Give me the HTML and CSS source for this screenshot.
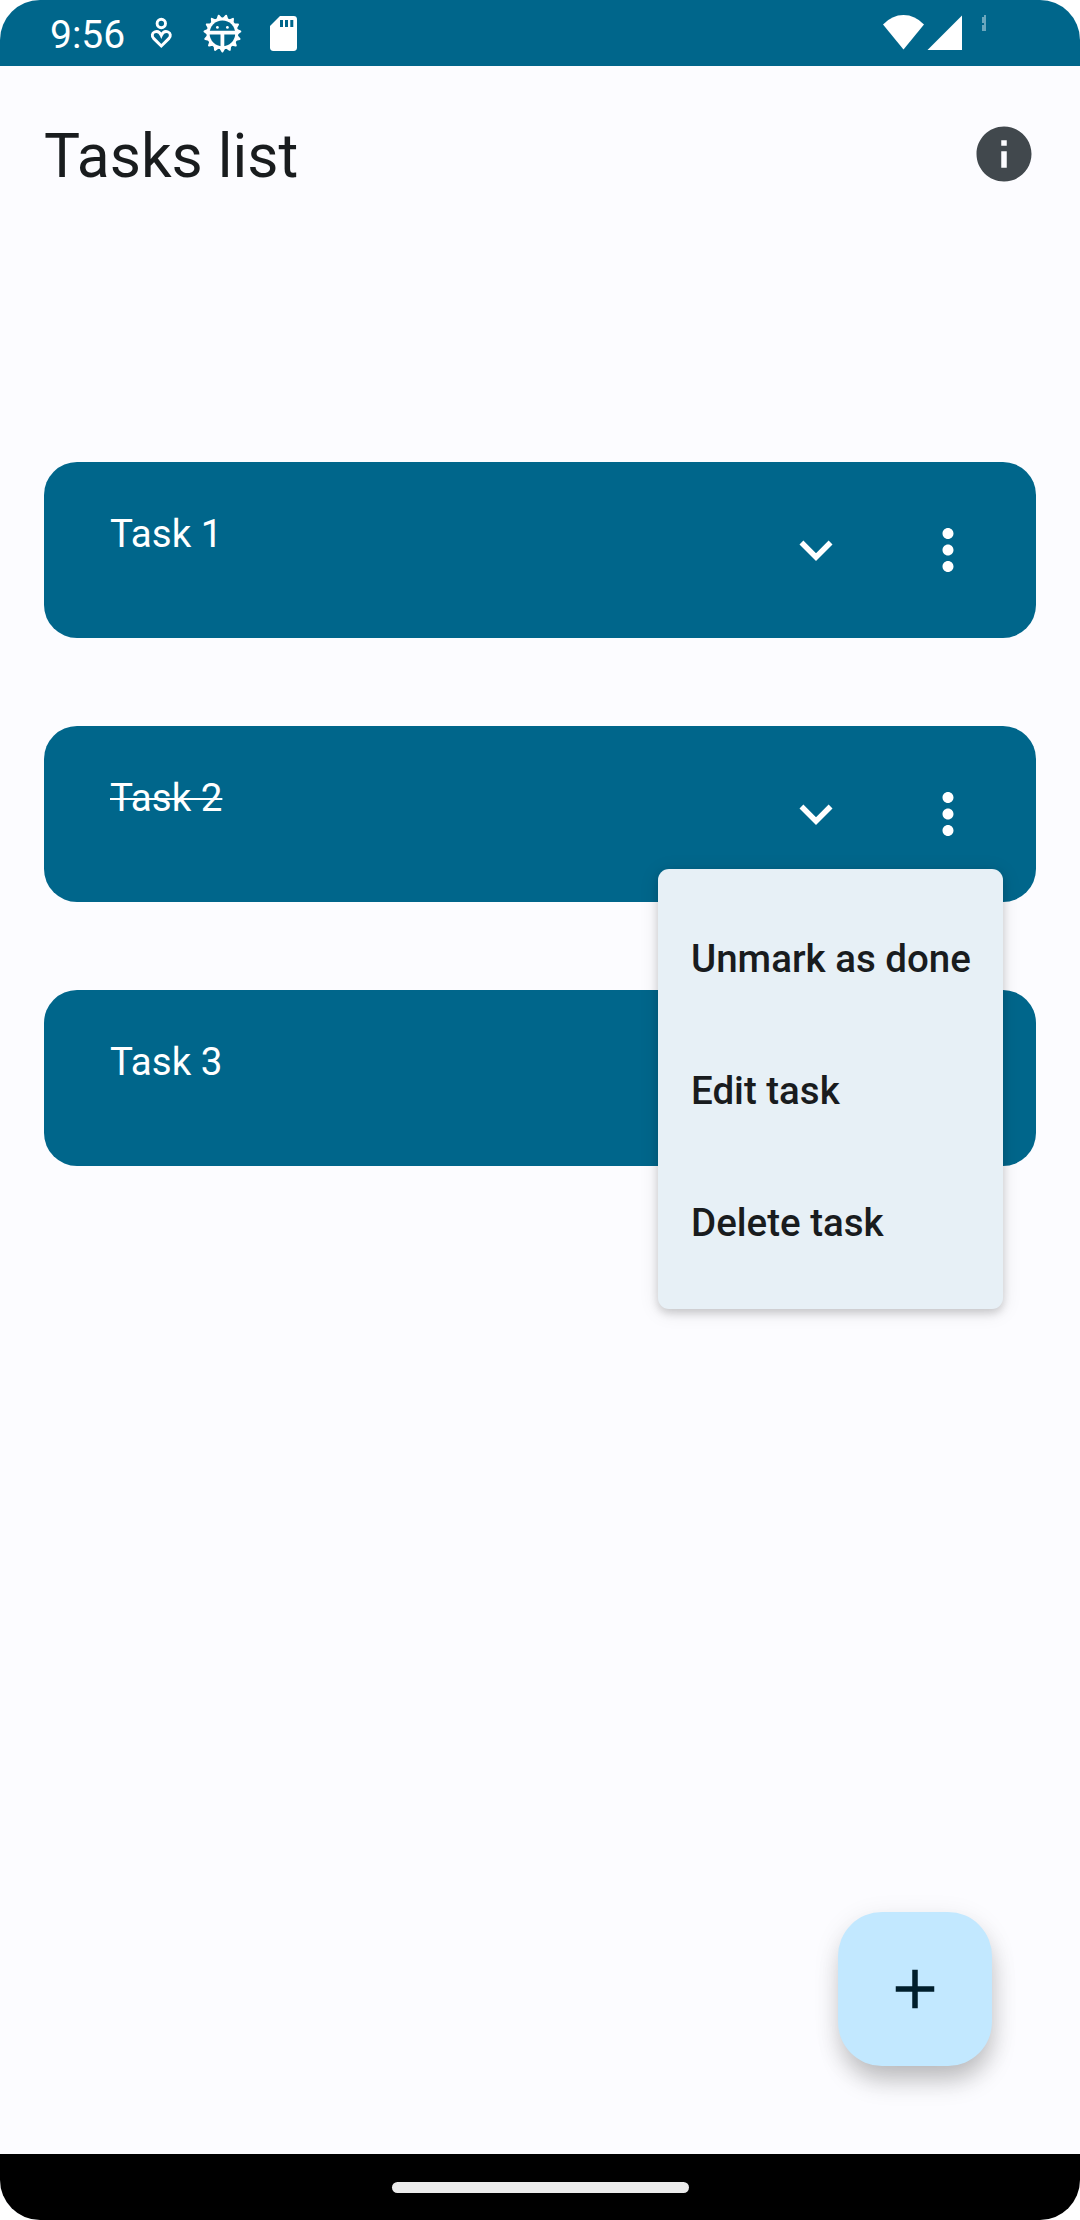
FILE: index.html
```html
<!DOCTYPE html>
<html lang="en">
<head>
<meta charset="utf-8">
<title>Tasks list</title>
<link rel="stylesheet" href="styles.css">
</head>
<body>
<div class="screen">
  <header class="status-bar">
    <span class="clock">9:56</span>
    <svg class="status-left" width="150" height="66" viewBox="148 0 150 66">
      <g fill="none" stroke="#fff" stroke-width="2.9">
        <circle cx="161.3" cy="23.5" r="4.2"/>
        <path d="M161.3 46 153.6 38.4C151.5 36 152 33 154.5 32C157.500 30.800 160 32.500 161.300 35.400C162.600 32.500 165 30.800 168.100 32C170.600 33 171.100 36 169 38.400Z"/>
      </g>
      <g transform="translate(222.4 33.400)">
        <g fill="#fff" stroke="#fff" stroke-width="2" stroke-linejoin="round">
          <path d="M0 18-15.590-9H15.590Z"/>
          <path d="M0 18-15.590-9H15.590Z" transform="rotate(24)"/>
          <path d="M0 18-15.590-9H15.590Z" transform="rotate(48)"/>
          <path d="M0 18-15.590-9H15.590Z" transform="rotate(72)"/>
          <path d="M0 18-15.590-9H15.590Z" transform="rotate(96)"/>
        </g>
        <circle r="15.900" fill="#fff"/>
        <circle r="12.800" fill="#00668b"/>
        <path d="M-14-.7H14M0-.7V14" stroke="#fff" stroke-width="3.800"/>
        <circle cx="-5" cy="-6" r="1.400" fill="#fff"/>
        <circle cx="5" cy="-6" r="1.400" fill="#fff"/>
      </g>
      <path d="M280 16H293.600Q297 16 297 19.400V47.600Q297 51 293.600 51H273.400Q270 51 270 47.600V26Z" fill="#fff"/>
      <path d="M280 20h3v7h-3zM285 20h3v7h-3zM290.300 20h3v7h-3z" fill="#00668b"/>
    </svg>
    <svg class="status-right" width="110" height="66" viewBox="880 0 110 66">
      <path d="M883 24.500Q892 15 903.500 15T924 24.500L903.500 49.500Z" fill="#fff"/>
      <path d="M927.500 50 962 15.500V50Z" fill="#fff"/>
      <path d="M984 15h2v16h-4v-6h2v-2h-2v-6h2z" fill="#6ba7bd"/>
    </svg>
  </header>
  <main class="content">
    <div class="app-bar">
      <h1 class="title">Tasks list</h1>
      <svg class="info" width="66" height="66" viewBox="0 0 24 24"><path fill="#41484d" d="M12 2C6.480 2 2 6.480 2 12s4.480 10 10 10 10-4.480 10-10S17.520 2 12 2zm1 15h-2v-6h2v6zm0-8h-2V7h2v2z"/></svg>
    </div>
    <ul class="tasks">
      <li class="card">
        <span class="name">Task 1</span>
        <svg class="icon" width="66" height="66" viewBox="0 0 24 24"><path d="M7.410 8.590 12 13.170l4.590-4.580L18 10l-6 6-6-6z"/></svg>
        <svg class="icon" width="66" height="66" viewBox="0 0 24 24"><path d="M12 8c1.100 0 2-.9 2-2s-.9-2-2-2-2 .9-2 2 .9 2 2 2zm0 2c-1.100 0-2 .9-2 2s.9 2 2 2 2-.9 2-2-.9-2-2-2zm0 6c-1.100 0-2 .9-2 2s.9 2 2 2 2-.9 2-2-.9-2-2-2z"/></svg>
      </li>
      <li class="card">
        <span class="name done">Task 2</span>
        <svg class="icon" width="66" height="66" viewBox="0 0 24 24"><path d="M7.410 8.590 12 13.170l4.590-4.580L18 10l-6 6-6-6z"/></svg>
        <svg class="icon" width="66" height="66" viewBox="0 0 24 24"><path d="M12 8c1.100 0 2-.9 2-2s-.9-2-2-2-2 .9-2 2 .9 2 2 2zm0 2c-1.100 0-2 .9-2 2s.9 2 2 2 2-.9 2-2-.9-2-2-2zm0 6c-1.100 0-2 .9-2 2s.9 2 2 2 2-.9 2-2-.9-2-2-2z"/></svg>
        <div class="menu">
          <div class="menu-item">Unmark as done</div>
          <div class="menu-item">Edit task</div>
          <div class="menu-item">Delete task</div>
        </div>
      </li>
      <li class="card">
        <span class="name">Task 3</span>
      </li>
    </ul>
    <button class="fab" aria-label="Add task">
      <svg width="66" height="66" viewBox="0 0 24 24"><path fill="#001e2c" d="M19 13h-6v6h-2v-6H5v-2h6V5h2v6h6z"/></svg>
    </button>
  </main>
  <footer class="nav-bar"><div class="pill"></div></footer>
</div>
</body>
</html>
```
FILE: styles.css
```css
* { box-sizing: border-box; }
body { margin: 0; background: #fff; font-family: Roboto, sans-serif; }
svg { display: block; flex: none; }

.screen {
  width: 1080px;
  height: 2220px;
  display: flex;
  flex-direction: column;
  border-radius: 40px;
  overflow: hidden;
  background: #fcfcff;
}

.status-bar {
  height: 66px;
  display: flex;
  align-items: center;
  padding: 0 90px 0 50px;
  background: #00668b;
  color: #fff;
}
.clock { width: 98px; font-size: 39px; line-height: 66px; padding-top: 3px; white-space: nowrap; }
.status-right { margin-left: auto; }

.content { flex: 1; display: flex; flex-direction: column; }
.app-bar {
  height: 176px;
  display: flex;
  justify-content: space-between;
  align-items: center;
  padding: 0 44px;
}
.title { margin: 0; padding-top: 4px; font-size: 60.5px; font-weight: 400; line-height: 77px; color: #191c1e; }
.info { margin-right: -0.5px; }

.tasks {
  list-style: none;
  margin: 0;
  padding: 220px 44px 0;
  display: flex;
  flex-direction: column;
  gap: 88px;
}
.card {
  position: relative;
  height: 176px;
  display: flex;
  align-items: center;
  gap: 66px;
  padding: 0 55px 0 66px;
  border-radius: 33px;
  background: #00668b;
  color: #fff;
}
.name {
  align-self: flex-start;
  margin: 44px auto 0 0;
  font-size: 38.5px;
  line-height: 55px;
}
.done { text-decoration: line-through; text-decoration-thickness: 2px; }
.icon { fill: #fff; }

.menu {
  position: absolute;
  z-index: 1;
  top: 143px;
  right: 33px;
  width: 345px;
  height: 440px;
  padding: 24px 0 20px;
  border-radius: 11px;
  background: #e7f0f6;
  box-shadow: 0 4px 9px rgba(0, 0, 0, 0.16), 0 3px 20px rgba(0, 0, 0, 0.1);
}
.menu-item {
  height: 132px;
  padding-left: 33px;
  font-size: 38.5px;
  font-weight: 500;
  line-height: 132px;
  white-space: nowrap;
  color: #191c1e;
}

.fab {
  width: 154px;
  height: 154px;
  margin: auto 88px 88px auto;
  padding: 0;
  display: grid;
  place-items: center;
  border: 0;
  border-radius: 44px;
  background: #c2e8ff;
  box-shadow: 2px 18px 26px -4px rgba(0, 0, 0, 0.22), 0 6px 28px rgba(0, 0, 0, 0.09);
}

.nav-bar {
  height: 66px;
  display: grid;
  place-items: center;
  background: #000;
}
.pill { width: 297px; height: 11px; border-radius: 6px; background: #ebebeb; }
```
